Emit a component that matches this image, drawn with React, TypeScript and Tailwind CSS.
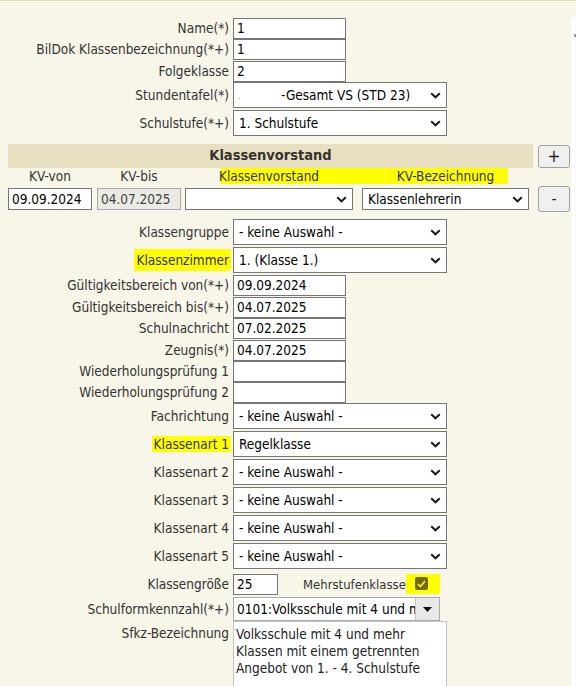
import React from "react";

const Chevron = () => (
  <svg width="11" height="7" viewBox="0 0 11 7" className="shrink-0">
    <path d="M1.2 1.2 L5.5 5.3 L9.8 1.2" stroke="#1c1c1c" strokeWidth="2" fill="none" />
  </svg>
);

function Label({ text, hl, tall }: { text: string; hl?: boolean; tall?: boolean }) {
  return (
    <div className="w-[231px] shrink-0 flex justify-end items-center whitespace-nowrap">
      {hl ? (
        tall ? (
          <span className="bg-[#ffff00] px-[3px] h-[22px] flex items-center pr-[2px]">{text}</span>
        ) : (
          <span className="bg-[#ffff00] pl-[2px] pr-[2px] h-[16px] flex items-center">{text}</span>
        )
      ) : (
        <span className="pr-[2px]">{text}</span>
      )}
    </div>
  );
}

function TextBox({ value, w }: { value: string; w: string }) {
  return (
    <div className={`${w} h-full border border-[#767676] bg-white text-black flex items-center pl-[3px] overflow-hidden whitespace-nowrap`}>
      {value}
    </div>
  );
}

function Select({ value, w }: { value: React.ReactNode; w: string }) {
  return (
    <div className={`${w} h-full border border-[#767676] bg-white text-black flex items-center pl-[5px] pr-[5px] justify-between overflow-hidden whitespace-nowrap`}>
      <span className="flex items-center">{value}</span>
      <Chevron />
    </div>
  );
}

export default function App() {
  return (
    <div className="w-[576px] h-[686px] bg-[#f8f5e9] border-t border-[#e7deb8] flex items-start overflow-hidden font-['DejaVu_Sans_Condensed','Liberation_Sans',sans-serif] text-[13.5px] text-[#333]">
      <div className="w-[571px] shrink-0 flex flex-col pt-[17px] *:shrink-0">
        {/* top block */}
        <div className="flex h-[21px]">
          <Label text="Name(*)" />
          <div className="ml-[2px] h-full"><TextBox value="1" w="w-[113px]" /></div>
        </div>
        <div className="flex h-[21px]">
          <Label text="BilDok Klassenbezeichnung(*+)" />
          <div className="ml-[2px] h-full"><TextBox value="1" w="w-[113px]" /></div>
        </div>
        <div className="flex h-[21px] mt-[1px]">
          <Label text="Folgeklasse" />
          <div className="ml-[2px] h-full"><TextBox value="2" w="w-[113px]" /></div>
        </div>
        <div className="flex h-[26px]">
          <Label text="Stundentafel(*)" />
          <div className="ml-[2px] h-full">
            <Select
              w="w-[214px]"
              value={
                <>
                  <span className="w-[1px] h-[1px] bg-[#f0a030] mt-[6px]" />
                  <span className="ml-[41px]">-Gesamt VS (STD 23)</span>
                </>
              }
            />
          </div>
        </div>
        <div className="flex h-[26px] mt-[2px]">
          <Label text="Schulstufe(*+)" />
          <div className="ml-[2px] h-full"><Select w="w-[214px]" value="1. Schulstufe" /></div>
        </div>

        {/* Klassenvorstand */}
        <div className="flex mt-[8px] h-[24px]">
          <div className="ml-[8px] w-[525px] h-full bg-[#e8dfc0] flex items-center justify-center font-bold text-[14.5px] text-[#333]">
            Klassenvorstand
          </div>
          <div className="ml-[5px] mt-[1px] w-[32px] h-[23px] bg-[#f0f0f0] border border-[#a0a0a0] rounded-[3px] flex items-center justify-center text-[17px] font-light text-[#222]">
            +
          </div>
        </div>
        <div className="relative flex h-[16px] items-center">
          <div className="absolute left-[221px] top-0 w-[287px] h-[16px] bg-[#ffff00]" />
          <div className="relative ml-[8px] w-[84px] text-center">KV-von</div>
          <div className="relative ml-[5px] w-[84px] text-center">KV-bis</div>
          <div className="relative ml-[4px] w-[168px] text-center">Klassenvorstand</div>
          <div className="relative ml-[9px] w-[167px] text-center">KV-Bezeichnung</div>
        </div>
        <div className="flex h-[26px] mt-[2px] items-center">
          <div className="ml-[8px] h-[22px]"><TextBox value="09.09.2024" w="w-[84px]" /></div>
          <div className="ml-[5px] h-[22px] w-[84px] border border-[#a9a9a9] bg-[#ebebe4] text-[#444] flex items-center pl-[3px]">
            04.07.2025
          </div>
          <div className="ml-[4px] h-[22px]"><Select w="w-[168px]" value="" /></div>
          <div className="ml-[9px] h-[22px]"><Select w="w-[167px]" value="Klassenlehrerin" /></div>
          <div className="ml-[9px] w-[32px] h-[26px] bg-[#f0f0f0] border border-[#a0a0a0] rounded-[3px] flex items-center justify-center text-[16px] text-[#222]">
            -
          </div>
        </div>

        {/* second block */}
        <div className="flex h-[26px] mt-[7px]">
          <Label text="Klassengruppe" />
          <div className="ml-[2px] h-full"><Select w="w-[214px]" value="- keine Auswahl -" /></div>
        </div>
        <div className="flex h-[26px] mt-[2px]">
          <Label text="Klassenzimmer" hl tall />
          <div className="ml-[2px] h-full"><Select w="w-[214px]" value="1. (Klasse 1.)" /></div>
        </div>
        <div className="flex h-[21px] mt-[2px]">
          <Label text="Gültigkeitsbereich von(*+)" />
          <div className="ml-[2px] h-full"><TextBox value="09.09.2024" w="w-[113px]" /></div>
        </div>
        <div className="flex h-[21px] mt-[1px]">
          <Label text="Gültigkeitsbereich bis(*+)" />
          <div className="ml-[2px] h-full"><TextBox value="04.07.2025" w="w-[113px]" /></div>
        </div>
        <div className="flex h-[21px]">
          <Label text="Schulnachricht" />
          <div className="ml-[2px] h-full"><TextBox value="07.02.2025" w="w-[113px]" /></div>
        </div>
        <div className="flex h-[21px] mt-[1px]">
          <Label text="Zeugnis(*)" />
          <div className="ml-[2px] h-full"><TextBox value="04.07.2025" w="w-[113px]" /></div>
        </div>
        <div className="flex h-[21px]">
          <Label text="Wiederholungsprüfung 1" />
          <div className="ml-[2px] h-full"><TextBox value="" w="w-[113px]" /></div>
        </div>
        <div className="flex h-[21px]">
          <Label text="Wiederholungsprüfung 2" />
          <div className="ml-[2px] h-full"><TextBox value="" w="w-[113px]" /></div>
        </div>
        <div className="flex h-[26px]">
          <Label text="Fachrichtung" />
          <div className="ml-[2px] h-full"><Select w="w-[214px]" value="- keine Auswahl -" /></div>
        </div>
        <div className="flex h-[26px] mt-[2px]">
          <Label text="Klassenart 1" hl />
          <div className="ml-[2px] h-full"><Select w="w-[214px]" value="Regelklasse" /></div>
        </div>
        <div className="flex h-[26px] mt-[2px]">
          <Label text="Klassenart 2" />
          <div className="ml-[2px] h-full"><Select w="w-[214px]" value="- keine Auswahl -" /></div>
        </div>
        <div className="flex h-[26px] mt-[2px]">
          <Label text="Klassenart 3" />
          <div className="ml-[2px] h-full"><Select w="w-[214px]" value="- keine Auswahl -" /></div>
        </div>
        <div className="flex h-[26px] mt-[2px]">
          <Label text="Klassenart 4" />
          <div className="ml-[2px] h-full"><Select w="w-[214px]" value="- keine Auswahl -" /></div>
        </div>
        <div className="flex h-[26px] mt-[2px]">
          <Label text="Klassenart 5" />
          <div className="ml-[2px] h-full"><Select w="w-[214px]" value="- keine Auswahl -" /></div>
        </div>

        <div className="flex h-[21px] mt-[5px] items-center">
          <Label text="Klassengröße" />
          <div className="ml-[2px] h-full"><TextBox value="25" w="w-[45px]" /></div>
          <div className="ml-[25px] w-[103px] whitespace-nowrap text-[13px]">Mehrstufenklasse</div>
          <div className="w-[34px] h-[20px] -mt-[2px] bg-[#ffff00] flex items-center">
            <div className="ml-[9px] w-[13px] h-[13px] rounded-[2px] bg-[#6e680a] flex items-center justify-center">
              <svg width="9" height="8" viewBox="0 0 9 8">
                <path d="M1 4.2 L3.4 6.5 L8 1.2" stroke="#f4ef1a" strokeWidth="1.8" fill="none" />
              </svg>
            </div>
          </div>
        </div>
        <div className="flex h-[24px] mt-[2px]">
          <Label text="Schulformkennzahl(*+)" />
          <div className="ml-[2px] w-[207px] h-full border border-[#a9a9a9] bg-white flex overflow-hidden">
            <div className="flex-1 flex items-center pl-[3px] text-black whitespace-nowrap overflow-hidden">
              0101:Volksschule mit 4 und m
            </div>
            <div className="w-[24px] shrink-0 h-full bg-[#e9e9e9] border-l border-[#c6c6c6] flex items-center justify-center">
              <svg width="9" height="5" viewBox="0 0 9 5">
                <path d="M0 0 L9 0 L4.5 5 Z" fill="#111" />
              </svg>
            </div>
          </div>
        </div>
        <div className="flex h-[80px]">
          <div className="w-[231px] shrink-0 flex justify-end pt-[2px]">
            <span className="pr-[2px]">Sfkz-Bezeichnung</span>
          </div>
          <div className="ml-[2px] w-[214px] h-full border border-[#c4c4c4] bg-white text-[#222] pl-[2px] pt-[4px] leading-[17px]">
            Volksschule mit 4 und mehr
            <br />
            Klassen mit einem getrennten
            <br />
            Angebot von 1. - 4. Schulstufe
          </div>
        </div>
      </div>
      <div className="w-[5px] mt-[17px] h-[700px] bg-[#fdfdfd] flex flex-col items-end">
        <div className="mt-[16px] w-[2px] h-[3px] bg-[#999]" />
      </div>
    </div>
  );
}
